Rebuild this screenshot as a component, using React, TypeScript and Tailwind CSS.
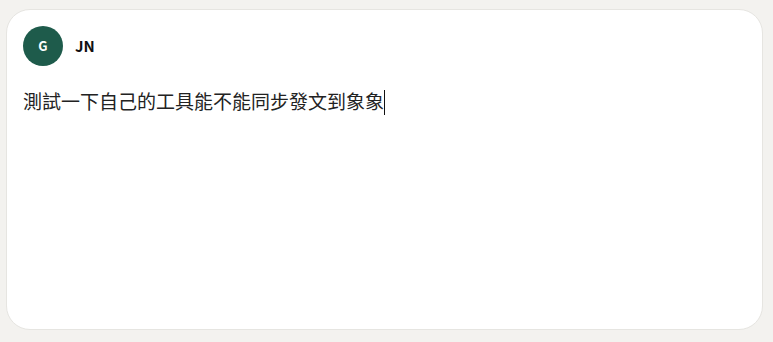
import React from 'react';

export default function App() {
  return (
    <div className="w-[773px] h-[342px] bg-[#f3f2ef] pt-[9px] pl-[6px] pr-[10px] pb-[12px]">
      <div className="h-full rounded-[24px] border border-[#e6e5e1] bg-white p-4 flex flex-col">
        {/* Author */}
        <div className="flex items-center gap-3">
          <div className="w-10 h-10 rounded-full bg-[#1e5b4b] flex items-center justify-center text-white text-[13px] font-bold font-['Noto_Sans_CJK_TC',sans-serif]">
            G
          </div>
          <span className="text-[15px] font-bold text-[#111] font-['Noto_Sans_CJK_TC',sans-serif]">JN</span>
        </div>

        {/* Editor */}
        <div className="mt-[22px] text-[19px] leading-[28px] text-[#222] font-['Noto_Sans','Noto_Sans_CJK_TC',sans-serif] flex items-center">
          <span>測試一下自己的工具能不能同步發文到象象</span>
          <span className="inline-block w-px h-[25px] bg-[#111]" />
        </div>
      </div>
    </div>
  );
}
